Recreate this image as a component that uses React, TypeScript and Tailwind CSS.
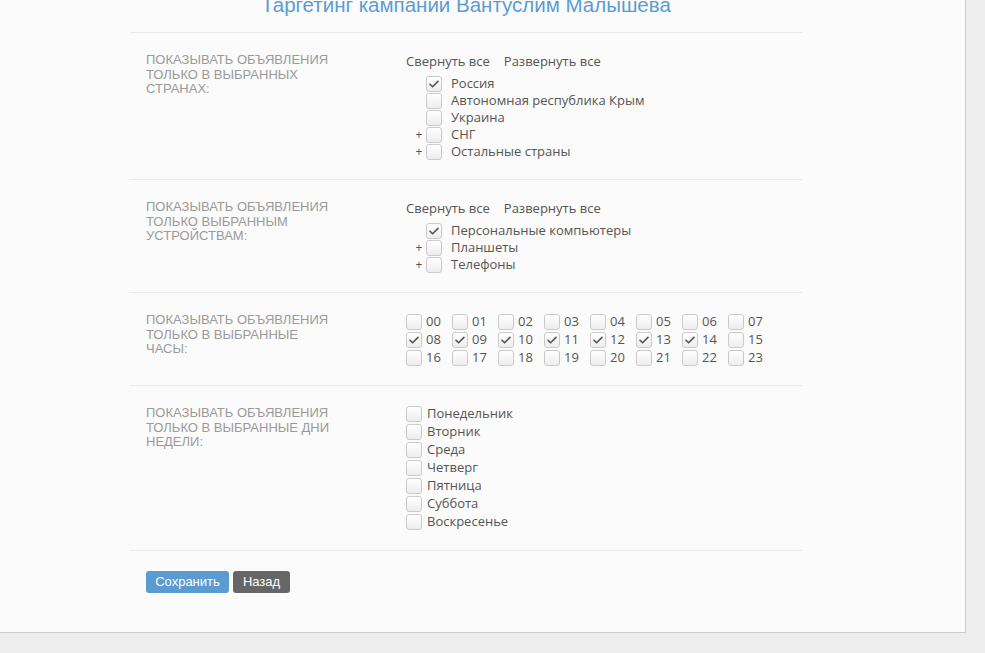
import { ReactNode } from 'react';

const countries = [
  { name: 'Россия', checked: true, expandable: false },
  { name: 'Автономная республика Крым', checked: false, expandable: false },
  { name: 'Украина', checked: false, expandable: false },
  { name: 'СНГ', checked: false, expandable: true },
  { name: 'Остальные страны', checked: false, expandable: true },
];

const devices = [
  { name: 'Персональные компьютеры', checked: true, expandable: false },
  { name: 'Планшеты', checked: false, expandable: true },
  { name: 'Телефоны', checked: false, expandable: true },
];

const hours = Array.from({ length: 24 }, (_, i) => ({
  label: String(i).padStart(2, '0'),
  checked: i >= 8 && i <= 14,
}));

const days = ['Понедельник', 'Вторник', 'Среда', 'Четверг', 'Пятница', 'Суббота', 'Воскресенье'];

function Checkbox({ checked = false }: { checked?: boolean }) {
  return (
    <span className="w-4 h-4 shrink-0 rounded-[3px] border border-[#cacaca] bg-gradient-to-b from-white to-[#ededed] flex items-center justify-center">
      {checked && (
        <svg width="12" height="12" viewBox="0 0 12 12" fill="none">
          <path d="M2 6.2l2.6 2.6L10 3.4" stroke="#555" strokeWidth="1.6" strokeLinecap="round" strokeLinejoin="round" />
        </svg>
      )}
    </span>
  );
}

function Section({ label, children }: { label: string; children: ReactNode }) {
  return (
    <div className="border-t border-[#ebebeb] py-[19px] flex">
      <div className="w-[276px] pl-4 shrink-0">
        <p className="w-[192px] mt-[1px] text-[13px] leading-[14.5px] uppercase text-[#9a9a9a] font-['Liberation_Sans',Arial,sans-serif]">
          {label}
        </p>
      </div>
      <div className="flex-1">{children}</div>
    </div>
  );
}

function TreeControls() {
  return (
    <div className="h-[18px] flex items-center gap-[14px] mb-[5px] pt-[1px]">
      <span>Свернуть все</span>
      <span>Развернуть все</span>
    </div>
  );
}

function TreeList({ items }: { items: { name: string; checked: boolean; expandable: boolean }[] }) {
  return (
    <div>
      {items.map((item) => (
        <div key={item.name} className="h-[17px] flex items-center">
          <span className="w-5 text-center text-[12px] leading-none pl-[6px] text-[#555]">
            {item.expandable ? '+' : ''}
          </span>
          <Checkbox checked={item.checked} />
          <span className="ml-[9px]">{item.name}</span>
        </div>
      ))}
    </div>
  );
}

export default function App() {
  return (
    <div className="min-h-[653px] bg-[#ededed] overflow-hidden font-['Open_Sans',Arial,sans-serif] text-[13px] text-[#555]">
      <div className="w-[966px] bg-[#fbfbfb] border-r border-b border-[#cbcbcb] pl-[130px] pb-[39px]">
        <div className="w-[672px]">
          <h1 className="-mt-[9px] h-[28px] leading-[28px] text-center text-[20.5px] text-[#5b9bd5] font-['Liberation_Sans',Arial,sans-serif]">
            Таргетинг кампании Вантуслим Малышева
          </h1>

          <div className="mt-[13px]">
            <Section label="Показывать объявления только в выбранных странах:">
              <TreeControls />
              <TreeList items={countries} />
            </Section>

            <Section label="Показывать объявления только выбранным устройствам:">
              <TreeControls />
              <TreeList items={devices} />
            </Section>

            <Section label="Показывать объявления только в выбранные часы:">
              <div className="grid grid-cols-[repeat(8,46px)] pt-[1px] -mb-[1px]">
                {hours.map((h) => (
                  <label key={h.label} className="h-[18px] flex items-center gap-1">
                    <Checkbox checked={h.checked} />
                    <span>{h.label}</span>
                  </label>
                ))}
              </div>
            </Section>

            <Section label="Показывать объявления только в выбранные дни недели:">
              <div>
                {days.map((d) => (
                  <label key={d} className="h-[18px] flex items-center gap-[5px]">
                    <Checkbox />
                    <span>{d}</span>
                  </label>
                ))}
              </div>
            </Section>

            <div className="border-t border-[#ebebeb] pt-[20px] pl-4 flex gap-1">
              <button className="h-[22px] w-[83px] rounded-[3px] bg-[#5b9bd1] text-white text-[13px] font-['Liberation_Sans',Arial,sans-serif]">
                Сохранить
              </button>
              <button className="h-[22px] w-[57px] rounded-[3px] bg-[#666666] text-white text-[13px] font-['Liberation_Sans',Arial,sans-serif]">
                Назад
              </button>
            </div>
          </div>
        </div>
      </div>
    </div>
  );
}
